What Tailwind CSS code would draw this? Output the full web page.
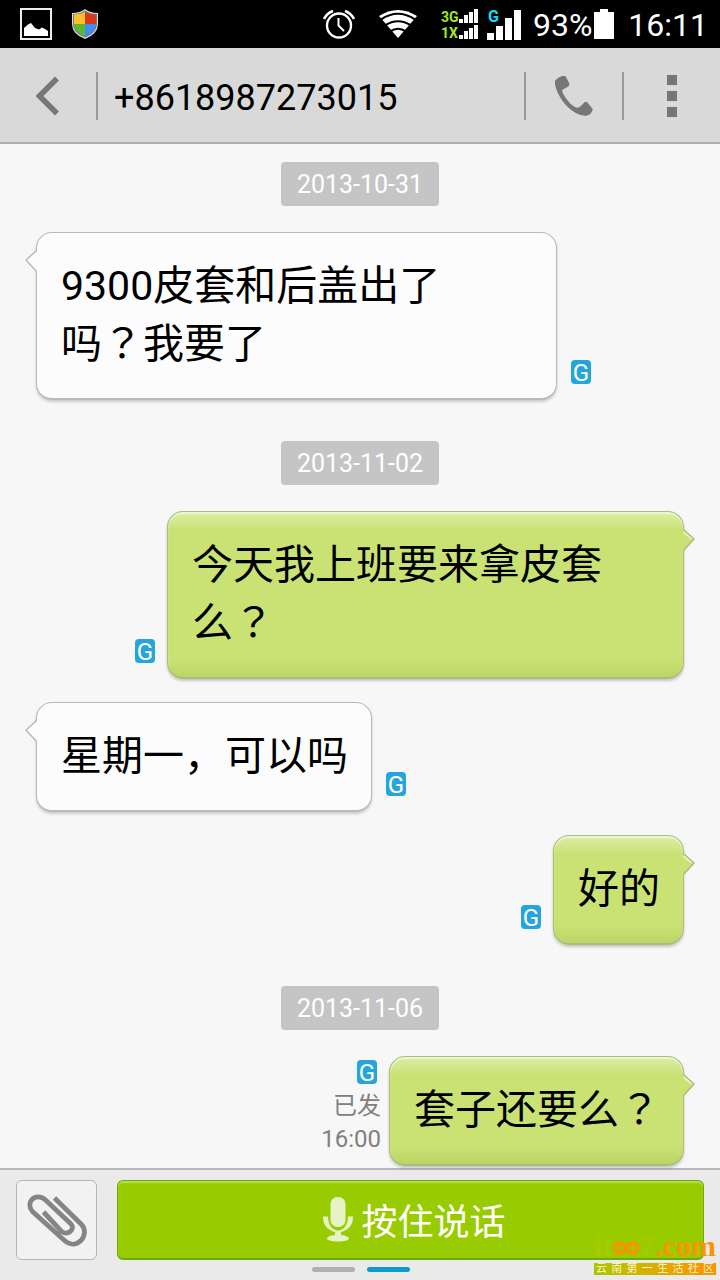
<!DOCTYPE html>
<html lang="zh-CN">
<head>
<meta charset="utf-8">
<meta name="viewport" content="width=device-width, initial-scale=1">
<title>+8618987273015</title>
<script src="https://cdn.jsdelivr.net/npm/@tailwindcss/browser@4"></script>
</head>
<body class="relative flex min-h-screen flex-col bg-[#f7f7f7] font-[Roboto,'Noto_Sans_CJK_SC',sans-serif] text-black">

<!-- Shared shapes -->
<svg class="hidden" aria-hidden="true">
  <symbol id="tail-left" viewBox="0 0 13 24"><path d="M13 1.500 11.500 2.500 1 11.500 11.500 22.500H13Z" fill="#fcfcfc"/><path d="M11.500 1.500 1 11 11.500 22.500" fill="none" stroke="#b9b9b9" stroke-width="1.500"/></symbol>
  <symbol id="tail-right" viewBox="0 0 13 24"><path d="M0 1.500H1.500L12 11 1.500 22.500H0Z" fill="#c9e273"/><path d="M1.500 4 10 11" fill="none" stroke="#e9f4c9" stroke-width="2"/><path d="M1.500 1.500 12 11 1.500 22.500" fill="none" stroke="#abbd7c" stroke-width="1.500"/></symbol>
</svg>

<div class="flex h-12 items-center justify-between bg-black pr-3 pl-5 text-white">
  <div class="flex items-center gap-5">
    <svg class="h-8 w-8" viewBox="0 0 32 32"><rect x="1" y="1" width="30" height="30" fill="none" stroke="#ececec" stroke-width="2"/><path d="M4 28V20L8 16.500 11 15 15 20 19 21.500 22 19.500 25 21 28 23V28Z" fill="#fff"/></svg>
    <svg class="h-[30px] w-[26px]" viewBox="0 0 26 30">
      <defs><clipPath id="shield"><path d="M13 3Q18 5.500 24 5.500V15Q24 23 13 27.500Q2 23 2 15V5.500Q8 5.500 13 3Z"/></clipPath></defs>
      <path d="M13 0Q18 4 26 4V15Q26 25 13 30Q0 25 0 15V4Q8 4 13 0Z" fill="#ddd"/>
      <path d="M13 1.500Q18 5 25 5V15Q25 24 13 28.500Q1 24 1 15V5Q8 5 13 1.500Z" fill="#777"/>
      <g clip-path="url(#shield)"><path d="M0 0H13V15H0Z" fill="#fdc02d"/><path d="M13 0H26V15H13Z" fill="#d6391b"/><path d="M0 15H13V30H0Z" fill="#5cb82f"/><path d="M13 15H26V30H13Z" fill="#3f8df5"/></g>
    </svg>
  </div>
  <div class="flex items-center">
    <svg class="mr-6 h-8 w-8" viewBox="0 0 32 32" fill="none" stroke="#fff"><circle cx="16" cy="17.500" r="12" stroke-width="2.400"/><path d="M15.500 10V17.500L21 23" stroke-width="2"/><path d="M1 11Q4 5 10 3M31 11Q28 5 22 3" stroke-width="2.600"/></svg>
    <svg class="mr-6 h-7 w-[38px]" viewBox="0 0 38 28"><path d="M19 28 0 6Q19-6 38 6Z" fill="#fff"/><path d="M2 9.500Q19-2 36 9.500M6 15.500Q19 7 32 15.500M11 21.500Q19 16 27 21.500" fill="none" stroke="#000" stroke-width="2.200"/></svg>
    <svg class="mr-2 h-8 w-[38px] overflow-visible" viewBox="0 0 38 32">
      <g fill="#a6ea1e" font-family="Roboto,sans-serif" font-size="14" font-weight="700"><text x="0" y="14">3G</text><text x="0" y="30">1X</text></g>
      <g fill="#fff"><path d="M18 11h4v4h-4zM23 7h4v8h-4zM28 4h4v11h-4zM33 1h4v14h-4z"/><path d="M18 27h4v4h-4zM23 23h4v8h-4zM28 20h4v11h-4zM33 17h4v14h-4z"/></g>
    </svg>
    <svg class="mr-3 h-8 w-[34px]" viewBox="0 0 34 32"><text x="1" y="14" fill="#0fe0fb" font-family="Roboto,sans-serif" font-size="16" font-weight="700">G</text><path d="M0 25h7v7H0zM9 18h7v14H9zM18 10h7v22h-7zM27 2h7v30h-7z" fill="#fff"/></svg>
    <span class="pt-0.5 text-[32px] leading-[48px]">93%</span>
    <svg class="mr-3.5 ml-0.5 h-[30px] w-5" viewBox="0 0 20 30"><path d="M6 0h8v3h6v27H0V3h6z" fill="#fff"/></svg>
    <span class="pt-0.5 text-[32px] leading-[48px]">16:11</span>
  </div>
</div>

<header class="flex h-24 items-center border-b-2 border-[#adadad] bg-[#d9d9d9] pt-0.5">
  <button type="button" aria-label="返回" class="flex h-full w-24 items-center justify-center"><svg class="h-10 w-6" viewBox="0 0 24 40"><path d="M21 2.500 3.500 20 21 37.500" fill="none" stroke="#777" stroke-width="5.500"/></svg></button>
  <div class="h-12 w-0.5 bg-[#999]"></div>
  <h1 class="flex-1 pt-1 pl-4 text-[36px] leading-[48px]">+8618987273015</h1>
  <div class="h-12 w-0.5 bg-[#999]"></div>
  <button type="button" aria-label="拨打电话" class="flex h-full w-24 items-center justify-center"><svg class="h-10 w-[38px]" viewBox="0 0 38 40"><path d="M0 4.700Q3 1 7.300 0Q9.500-.5 10.700.5L14.300 7.300Q14.800 9 13.300 10.300L10 12.500Q6.800 13 7.300 15.500Q8.500 20 15.700 28Q20 31.700 22.300 31.700Q24.500 31.700 25.700 30.300L29 26.700Q30.700 25 32.300 26.300L37.700 33Q38 34.500 35.700 37.500Q33 40 30 39.700Q25.500 39.700 20.700 37Q12.500 32 7.300 24.700Q1.300 16 0 8Z" fill="#777"/></svg></button>
  <div class="h-12 w-0.5 bg-[#999]"></div>
  <button type="button" aria-label="更多选项" class="flex h-full w-24 flex-col items-center justify-center gap-1.5"><span class="size-2.5 bg-[#777]"></span><span class="size-2.5 bg-[#777]"></span><span class="size-2.5 bg-[#777]"></span></button>
</header>

<main class="flex flex-1 flex-col px-9 pt-[18px] pb-0.5">
  <time datetime="2013-10-31" class="flex h-11 w-[158px] items-center justify-center self-center rounded bg-[#c5c5c5] pt-0.5 text-[25px] text-white">2013-10-31</time>

  <div class="mt-[26px] flex items-end gap-3.5">
    <p class="relative w-[521px] rounded-2xl border border-b-2 border-[#b9b9b9] bg-[#fcfcfc] pt-6 pr-[23px] pb-[25px] pl-6 text-[41px] leading-[58px] shadow-[0_2px_3px_rgba(0,0,0,0.18)]"><svg class="absolute top-4 -left-3 h-6 w-[13px]"><use href="#tail-left"/></svg>9300皮套和后盖出了<br>吗<span lang="zh-TW" class="font-['Noto_Sans_CJK_TC',sans-serif] leading-none">？</span>我要了</p>
    <span class="mb-4 flex h-6 w-5 items-center justify-center rounded bg-[#25a5db] pt-0.5 text-[24px] leading-6 text-white">G</span>
  </div>

  <time datetime="2013-11-02" class="mt-[41px] flex h-11 w-[158px] items-center justify-center self-center rounded bg-[#c5c5c5] pt-0.5 text-[25px] text-white">2013-11-02</time>

  <div class="mt-[26px] flex items-end justify-end gap-3">
    <span class="mb-4 flex h-6 w-5 items-center justify-center rounded bg-[#25a5db] pt-0.5 text-[24px] leading-6 text-white">G</span>
    <p class="relative w-[517px] rounded-2xl border border-b-2 border-[#abbd7c] bg-[linear-gradient(#dcedaa_0,#c9e273_18px,#c9e273_calc(100%_-_18px),#bcd468_100%)] pt-6 pr-[23px] pb-[25px] pl-6 text-[41px] leading-[58px] shadow-[0_2px_3px_rgba(0,0,0,0.2),inset_0_2px_1px_#eef7d3]"><svg class="absolute top-4 -right-3 h-6 w-[13px]"><use href="#tail-right"/></svg>今天我上班要来拿皮套么<span lang="zh-TW" class="font-['Noto_Sans_CJK_TC',sans-serif] leading-none">？</span></p>
  </div>

  <div class="mt-[23px] flex items-end gap-3.5">
    <p class="relative rounded-2xl border border-b-2 border-[#b9b9b9] bg-[#fcfcfc] pt-6 pr-[23px] pb-[25px] pl-6 text-[41px] leading-[58px] shadow-[0_2px_3px_rgba(0,0,0,0.18)]"><svg class="absolute top-4 -left-3 h-6 w-[13px]"><use href="#tail-left"/></svg>星期一，可以吗</p>
    <span class="mb-4 flex h-6 w-5 items-center justify-center rounded bg-[#25a5db] pt-0.5 text-[24px] leading-6 text-white">G</span>
  </div>

  <div class="mt-[23px] flex items-end justify-end gap-3">
    <span class="mb-4 flex h-6 w-5 items-center justify-center rounded bg-[#25a5db] pt-0.5 text-[24px] leading-6 text-white">G</span>
    <p class="relative rounded-2xl border border-b-2 border-[#abbd7c] bg-[linear-gradient(#dcedaa_0,#c9e273_18px,#c9e273_calc(100%_-_18px),#bcd468_100%)] pt-6 pr-[23px] pb-[25px] pl-6 text-[41px] leading-[58px] shadow-[0_2px_3px_rgba(0,0,0,0.2),inset_0_2px_1px_#eef7d3]"><svg class="absolute top-4 -right-3 h-6 w-[13px]"><use href="#tail-right"/></svg>好的</p>
  </div>

  <time datetime="2013-11-06" class="mt-[41px] flex h-11 w-[158px] items-center justify-center self-center rounded bg-[#c5c5c5] pt-0.5 text-[25px] text-white">2013-11-06</time>

  <div class="mt-[26px] flex items-start justify-end gap-2">
    <div class="flex flex-col items-end pt-1 text-[24px] leading-[33px] text-[#808080]">
      <span class="mr-1 mb-1.5 flex h-6 w-5 items-center justify-center rounded bg-[#25a5db] pt-0.5 text-[24px] leading-6 text-white">G</span>
      <span>已发</span>
      <span>16:00</span>
    </div>
    <p class="relative rounded-2xl border border-b-2 border-[#abbd7c] bg-[linear-gradient(#dcedaa_0,#c9e273_18px,#c9e273_calc(100%_-_18px),#bcd468_100%)] pt-6 pr-[23px] pb-[25px] pl-6 text-[41px] leading-[58px] shadow-[0_2px_3px_rgba(0,0,0,0.2),inset_0_2px_1px_#eef7d3]"><svg class="absolute top-4 -right-3 h-6 w-[13px]"><use href="#tail-right"/></svg>套子还要么<span lang="zh-TW" class="font-['Noto_Sans_CJK_TC',sans-serif] leading-none">？</span></p>
  </div>
</main>

<footer class="border-t-2 border-[#b8b8b8] bg-[#eaeaea] px-4 pt-2.5 pb-2">
  <div class="flex gap-5">
    <button type="button" aria-label="添加附件" class="flex h-20 w-[81px] items-center justify-center rounded-md border border-[#b5b5b5] bg-[#f2f2f2]"><svg class="h-[54px] w-[60px]" viewBox="0 0 60 54" fill="none" stroke="#858585" stroke-width="4.800"><path d="M27.500 5 54.500 31.500C59 36 58 43.500 54 47.500C49 52.500 42.500 52 37.500 47.500L5.500 18.500C1.500 14 2.500 9 5 6.500C8.500 3 14 3 18.500 7L44 31C49 36.500 40 43 34.500 38.500L16.500 19"/></svg></button>
    <button type="button" class="flex h-20 flex-1 items-center justify-center gap-2 rounded-md border border-b-2 border-[#6cab0b] bg-[#99cc00] pl-2 text-[36px] text-white shadow-[inset_0_2px_1px_#b9dc50]"><svg class="h-12 w-[30px]" viewBox="0 0 30 48" fill="#e7f3c6"><rect x="7.500" y="1" width="15" height="30" rx="7"/><path d="M0 20.500H5C5 39 25 39 25 20.500H30C30 30 25 34 18 36V39C23 39.500 26 41 26 42.500C26 46.500 4 46.500 4 42.500C4 41 7 39.500 12 39V36C5 34 0 30 0 20.500Z"/></svg><span class="pt-1.5">按住说话</span></button>
  </div>
  <div class="mt-[7px] flex justify-center gap-3 pl-0.5"><span class="h-[5px] w-[43px] rounded-sm bg-[#b0b0b0]"></span><span class="h-[5px] w-[43px] rounded-sm bg-[#0b9bd1]"></span></div>
</footer>

<!-- Site mark -->
<div class="absolute right-1 bottom-[5px] w-[122px]">
  <div class="flex items-end justify-between font-['Liberation_Serif',serif] text-[30px] leading-[34px] font-bold text-[#fb9300]">
    <span class="text-[#a9c900]">it</span>
    <svg class="mb-[7px] h-4 w-[26px]" viewBox="0 0 26 16" fill="none" stroke="#fb9300" stroke-width="4"><path d="M13 8C9 2 2 1 2 8S9 14 13 8S24 1 24 8S17 14 13 8Z"/></svg>
    <span class="text-[#a9c900]">7</span>
    <span>.com</span>
  </div>
  <div class="flex h-3 items-center justify-between bg-linear-to-r from-[#aac500] to-[#ff9000] px-0.5 text-[11px] leading-3 text-[#fbf5cc]"><span>云</span><span>南</span><span>第</span><span>一</span><span>生</span><span>活</span><span>社</span><span>区</span></div>
</div>
</body>
</html>
